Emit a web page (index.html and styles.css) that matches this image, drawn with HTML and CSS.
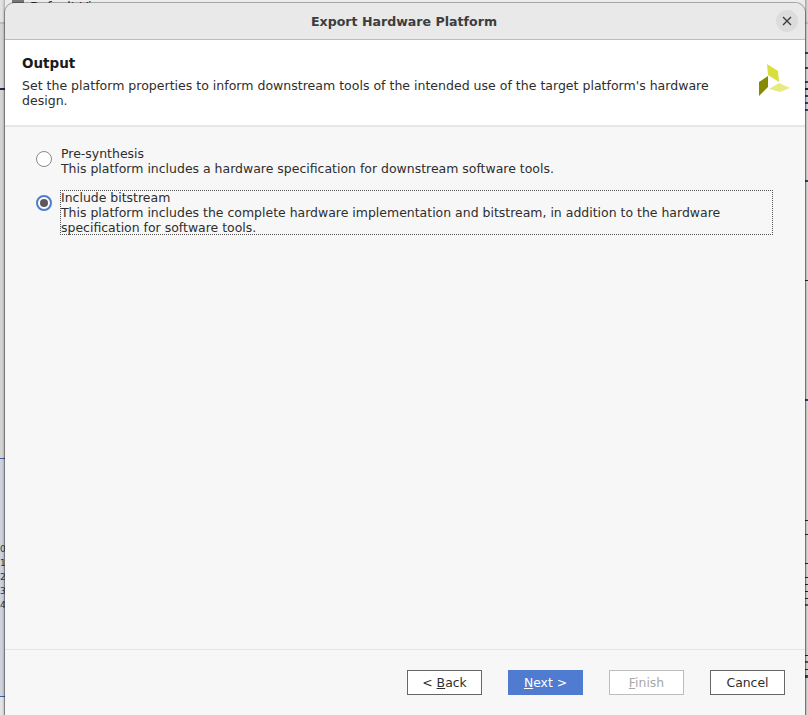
FILE: index.html
```html
<!DOCTYPE html>
<html lang="en">
<head>
    <meta charset="UTF-8">
    <title>Export Hardware Platform</title>
    <link rel="stylesheet" href="styles.css">
</head>
<body>
    <div class="backdrop-left">
        <div class="row-numbers">
            <span>0</span><span>1</span><span>2</span><span>3</span><span>4</span>
        </div>
    </div>
    <div class="backdrop-right"></div>
    <div class="backdrop-top">
        <span class="check"></span><span class="backdrop-label">Default View</span>
    </div>
    <div class="dialog">
        <div class="titlebar">
            <div class="title">Export Hardware Platform</div>
            <button class="close-btn" aria-label="Close">
                <svg width="10" height="10" viewBox="0 0 10 10"><path d="M1 1L9 9M9 1L1 9" stroke="#3d3d3d" stroke-width="1.4" fill="none"/></svg>
            </button>
        </div>
        <div class="header">
            <div class="header-text">
                <h1>Output</h1>
                <p>Set the platform properties to inform downstream tools of the intended use of the target platform's hardware design.</p>
            </div>
            <svg class="logo" width="32" height="32" viewBox="759 64 32 32">
                <polygon points="767,64 778,71 779,82 768,75" fill="#d9de3a"/>
                <polygon points="759,82 768,76 768,87 759,96" fill="#868a00"/>
                <polygon points="769,89 779,83 790,88 780,92" fill="#e6ea80"/>
            </svg>
        </div>
        <div class="content">
            <div class="option">
                <span class="radio"></span>
                <div class="option-text">
                    <div>Pre-synthesis</div>
                    <div>This platform includes a hardware specification for downstream software tools.</div>
                </div>
            </div>
            <div class="option">
                <span class="radio checked"></span>
                <div class="option-text focused">
                    <div>Include bitstream</div>
                    <div>This platform includes the complete hardware implementation and bitstream, in addition to the hardware specification for software tools.</div>
                </div>
            </div>
        </div>
        <div class="footer">
            <button class="btn">&lt; <u>B</u>ack</button>
            <button class="btn primary"><u>N</u>ext &gt;</button>
            <button class="btn disabled"><u>F</u>inish</button>
            <button class="btn">Cancel</button>
        </div>
    </div>
</body>
</html>
```

FILE: styles.css
```css
html, body {
    height: 100%;
}
body {
    margin: 0;
    overflow: hidden;
    position: relative;
    background-color: #ececec;
    font-family: "DejaVu Sans", sans-serif;
    font-size: 12.5px;
    color: #2e2e2e;
}
.backdrop-left {
    position: absolute;
    left: 0;
    top: 0;
    width: 5px;
    height: 715px;
    background-image:
        linear-gradient(to right, rgba(0, 0, 0, 0) 40%, rgba(0, 0, 0, 0.22) 100%),
        linear-gradient(to bottom,
            #e2e2e2 0, #e2e2e2 22px, #bdbdbd 22px, #bdbdbd 24px,
            #d4d4d4 24px, #d4d4d4 88px, #1f2a3f 88px, #1f2a3f 90px,
            #d4d4d4 90px, #d4d4d4 458px, #3f5f9f 458px, #3f5f9f 459px,
            #cdd2dc 459px, #cdd2dc 696px, #3f5f9f 696px, #3f5f9f 697px,
            #e4e4e4 697px);
}
.row-numbers {
    display: flex;
    flex-direction: column;
    padding-top: 542px;
    font-size: 9px;
    line-height: 14px;
    color: #333;
}
.backdrop-right {
    position: absolute;
    right: 0;
    top: 0;
    width: 3px;
    height: 715px;
    background-image:
        linear-gradient(to right, rgba(0, 0, 0, 0.3) 0, rgba(0, 0, 0, 0.02) 100%),
        linear-gradient(to bottom,
            #e4e4e4 0, #e4e4e4 22px, #c8c8c8 22px, #c8c8c8 24px,
            #e4e4e4 24px, #e4e4e4 52px, #2f4a86 52px, #2f4a86 54px,
            #e4e4e4 54px, #e4e4e4 67px, #2f4a86 67px, #2f4a86 69px,
            #e4e4e4 69px, #e4e4e4 81px, #2f4a86 81px, #2f4a86 83px,
            #e4e4e4 83px, #e4e4e4 88px, #1f2a3f 88px, #1f2a3f 90px,
            #e4e4e4 90px, #e4e4e4 95px, #2f4a86 95px, #2f4a86 97px,
            #e4e4e4 97px, #e4e4e4 102px, #2f4a86 102px, #2f4a86 104px,
            #e4e4e4 104px, #e4e4e4 109px, #2f4a86 109px, #2f4a86 111px,
            #e4e4e4 111px, #e4e4e4 180px, #2f4a86 180px, #2f4a86 182px,
            #e4e4e4 182px, #e4e4e4 280px, #1f2a3f 280px, #1f2a3f 281px,
            #e4e4e4 281px, #e4e4e4 399px, #2f4a86 399px, #2f4a86 401px,
            #e4e4e4 401px, #e4e4e4 520px, #1f2a3f 520px, #1f2a3f 521px,
            #e4e4e4 521px, #e4e4e4 534px, #1f2a3f 534px, #1f2a3f 535px,
            #e4e4e4 535px, #e4e4e4 563px, #1f2a3f 563px, #1f2a3f 564px,
            #e4e4e4 564px, #e4e4e4 577px, #1f2a3f 577px, #1f2a3f 578px,
            #e4e4e4 578px, #e4e4e4 584px, #1f2a3f 584px, #1f2a3f 585px,
            #e4e4e4 585px, #e4e4e4 591px, #1f2a3f 591px, #1f2a3f 592px,
            #e4e4e4 592px, #e4e4e4 598px, #1f2a3f 598px, #1f2a3f 599px,
            #e4e4e4 599px, #e4e4e4 604px, #55606f 604px, #55606f 606px,
            #e4e4e4 606px, #e4e4e4 655px, #1f2a3f 655px, #1f2a3f 656px,
            #e4e4e4 656px, #e4e4e4 661px, #55606f 661px, #55606f 663px,
            #e4e4e4 663px, #e4e4e4 669px, #1f2a3f 669px, #1f2a3f 670px,
            #e4e4e4 670px, #e4e4e4 675px, #2f4a86 675px, #2f4a86 678px,
            #e4e4e4 678px);
}
.backdrop-top {
    position: absolute;
    left: 12px;
    top: 0;
    display: flex;
    gap: 6px;
    font-size: 12.5px;
    line-height: 14px;
    color: #333;
}
.check {
    width: 12px;
    height: 12px;
    background-color: #777;
}
.dialog {
    position: absolute;
    left: 5px;
    top: 3px;
    width: 800px;
    height: 712px;
    display: flex;
    flex-direction: column;
    background-color: #f7f7f7;
    border-radius: 10px 10px 0 0;
    box-shadow: 0 0 0 1px rgba(0, 0, 0, 0.3);
    overflow: hidden;
}
.titlebar {
    height: 36px;
    flex-shrink: 0;
    display: flex;
    align-items: center;
    justify-content: center;
    position: relative;
    background-color: #e9e9e9;
    border-bottom: 1px solid #bdbdbd;
}
.title {
    font-weight: bold;
    font-size: 12.6px;
    color: #3d3d3d;
    margin-right: 2px;
}
.close-btn {
    position: absolute;
    right: 7px;
    top: 7px;
    width: 22px;
    height: 22px;
    padding: 0;
    border: none;
    border-radius: 50%;
    background-color: #dcdcdc;
    display: flex;
    align-items: center;
    justify-content: center;
}
.header {
    height: 87px;
    flex-shrink: 0;
    box-sizing: border-box;
    display: flex;
    justify-content: space-between;
    padding: 15px 14px 0 17px;
    background-color: #fff;
    border-bottom: 2px solid #e6e6e6;
}
.header h1 {
    margin: 0 0 6px 0;
    font-size: 13.5px;
    line-height: 17px;
    font-weight: bold;
    color: #1a1a1a;
}
.header p {
    margin: 0;
    width: 710px;
    font-size: 12.54px;
    line-height: 15px;
    color: #2e2e2e;
}
.logo {
    margin-top: 9px;
    flex-shrink: 0;
}
.content {
    flex: 1;
    padding: 19px 32px 0 31px;
    display: flex;
    flex-direction: column;
    gap: 14px;
}
.option {
    display: flex;
    align-items: flex-start;
}
.radio {
    width: 16px;
    height: 16px;
    box-sizing: border-box;
    margin-top: 5px;
    margin-right: 8px;
    flex-shrink: 0;
    border: 1px solid #8a8a8a;
    border-radius: 50%;
    background-color: #fff;
}
.radio.checked {
    border: 2px solid #4f7bd0;
    display: flex;
    align-items: center;
    justify-content: center;
}
.radio.checked::after {
    content: "";
    width: 8px;
    height: 8px;
    border-radius: 50%;
    background-color: #5a5a5a;
}
.option-text {
    flex: 1;
    font-size: 12.47px;
    line-height: 15px;
    padding-left: 1px;
}
.option-text.focused {
    outline: 1px dotted #555;
    outline-offset: -1px;
}
.footer {
    height: 66px;
    flex-shrink: 0;
    box-sizing: border-box;
    border-top: 1px solid #e4e4e4;
    display: flex;
    justify-content: flex-end;
    gap: 26px;
    padding: 20px 20px 0 0;
}
.btn {
    width: 75px;
    height: 25px;
    box-sizing: border-box;
    padding: 0;
    border: 1px solid #666;
    background-color: #fff;
    font-family: "DejaVu Sans", sans-serif;
    font-size: 12.4px;
    color: #2e2e2e;
}
.btn.primary {
    background-color: #4f7bd0;
    border-color: #4f7bd0;
    color: #fff;
}
.btn.disabled {
    border-color: #bdbdbd;
    color: #a8a8a8;
}
```
